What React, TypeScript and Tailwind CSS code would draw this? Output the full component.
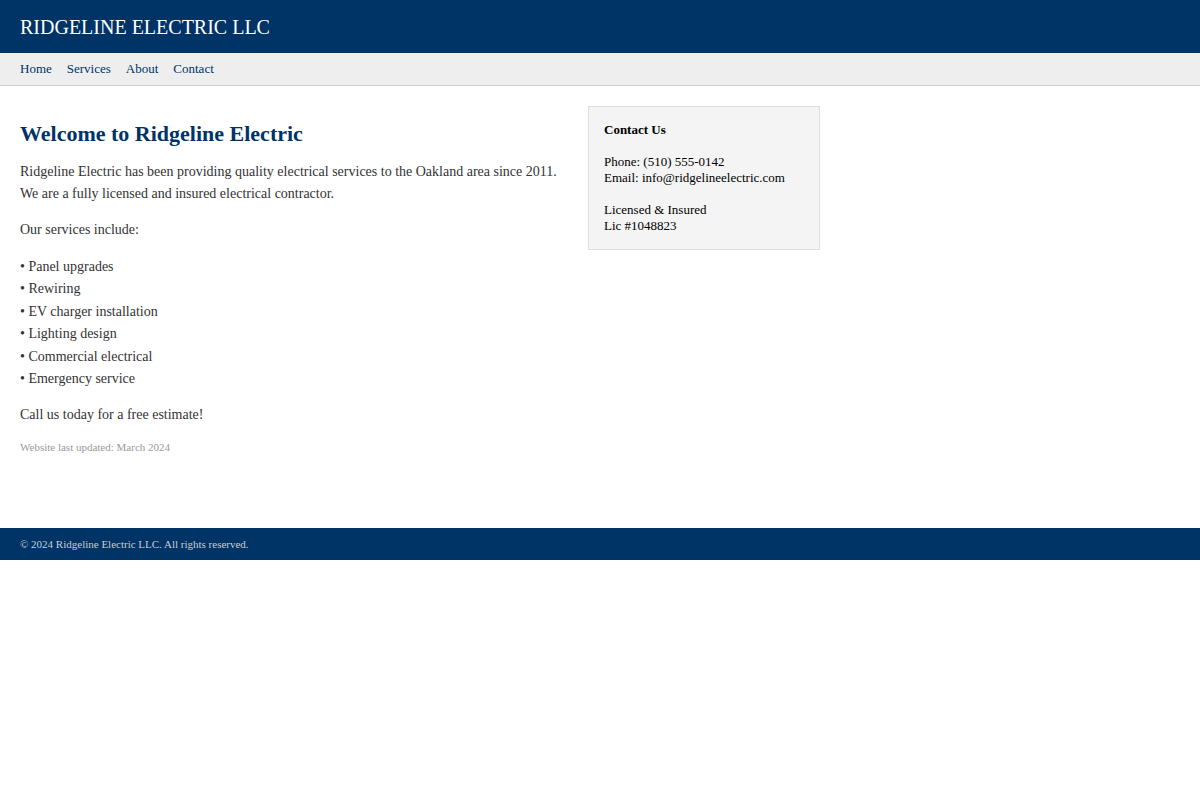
export default function App() {
  const services = [
    'Panel upgrades',
    'Rewiring',
    'EV charger installation',
    'Lighting design',
    'Commercial electrical',
    'Emergency service',
  ];

  return (
    <div className="bg-white text-[#333] font-['Liberation_Serif',serif]">
      {/* Header */}
      <header className="h-[53px] bg-[#003366] px-[20px] flex items-center">
        <h1 className="text-[20px] leading-none text-white font-normal">RIDGELINE ELECTRIC LLC</h1>
      </header>

      {/* Nav */}
      <nav className="h-[33px] bg-[#eeeeee] border-b border-[#cccccc] px-[20px] flex items-center gap-[15px] text-[13px] text-[#003366]">
        <a href="#">Home</a>
        <a href="#">Services</a>
        <a href="#">About</a>
        <a href="#">Contact</a>
      </nav>

      {/* Main */}
      <main className="flex gap-[20px] p-[20px] pb-[74px]">
        <div className="w-[548px]">
          <h2 className="mt-[15px] text-[22px] leading-[26px] font-bold text-[#003366]">
            Welcome to Ridgeline Electric
          </h2>
          <p className="mt-[14px] text-[14px] leading-[22px]">
            Ridgeline Electric has been providing quality electrical services to the Oakland area since 2011. We are a
            fully licensed and insured electrical contractor.
          </p>
          <p className="mt-[14px] text-[14px] leading-[22px]">Our services include:</p>
          <ul className="mt-[15px] text-[14px] leading-[22.4px]">
            {services.map((s) => (
              <li key={s}>• {s}</li>
            ))}
          </ul>
          <p className="mt-[14px] text-[14px] leading-[22px]">Call us today for a free estimate!</p>
          <p className="mt-[14px] text-[11px] leading-[14px] text-[#999999]">Website last updated: March 2024</p>
        </div>

        <aside className="self-start w-[232px] bg-[#f4f4f4] border border-[#dddddd] p-[15px] text-[13px] leading-[16px] text-black">
          <strong className="font-bold">Contact Us</strong>
          <br />
          <br />
          Phone: (510) 555-0142
          <br />
          Email: info@ridgelineelectric.com
          <br />
          <br />
          Licensed &amp; Insured
          <br />
          Lic #1048823
        </aside>
      </main>

      {/* Footer */}
      <footer className="h-[32px] bg-[#003366] px-[20px] flex items-center text-[11px] text-[#cccccc]">
        © 2024 Ridgeline Electric LLC. All rights reserved.
      </footer>
    </div>
  );
}
